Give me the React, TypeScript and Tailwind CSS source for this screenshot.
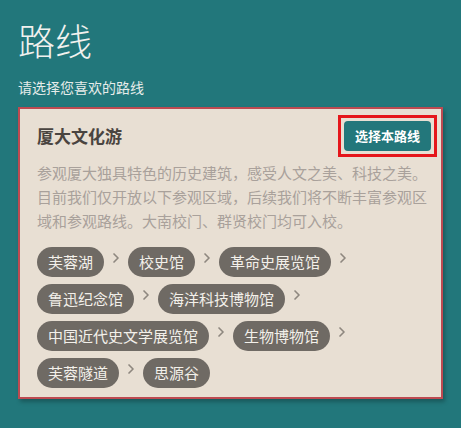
import { ChevronRight } from 'lucide-react'

const rows: string[][] = [
  ['芙蓉湖', '校史馆', '革命史展览馆'],
  ['鲁迅纪念馆', '海洋科技博物馆'],
  ['中国近代史文学展览馆', '生物博物馆'],
  ['芙蓉隧道', '思源谷'],
]

export default function App() {
  const last = rows.length - 1
  return (
    <div
      className="w-[461px] h-[428px] bg-[#22777b] px-[18px] pt-[17px] overflow-hidden"
      style={{ fontFamily: '"Noto Sans CJK SC", "Noto Sans", sans-serif' }}
    >
      <h1 className="text-[37px] leading-[46px] font-light text-[#f1f1ee]">路线</h1>
      <p className="mt-[14px] text-[14px] leading-[20px] text-[#e6ecea]">请选择您喜欢的路线</p>

      <div className="mt-[10px] h-[292px] bg-[#e8dfd3] border-2 border-[#bd4a51] shadow-[2px_3px_4px_rgba(0,0,0,0.25)] pl-[17px] pr-[10px] pt-[6px]">
        <div className="flex items-center justify-between">
          <h2 className="text-[17px] font-bold text-[#4a4440] leading-[24px]">厦大文化游</h2>
          <div className="border-[3px] border-[#e5161b] p-[3px] -mr-[6px]">
            <button className="bg-[#23777b] text-white text-[13px] font-bold rounded-[4px] px-[11px] h-[30px] leading-[30px]">
              选择本路线
            </button>
          </div>
        </div>
        <p className="mt-[4px] text-[15px] leading-[24px] text-[#a9a19b]">
          参观厦大独具特色的历史建筑，感受人文之美、科技之美。目前我们仅开放以下参观区域，后续我们将不断丰富参观区域和参观路线。大南校门、群贤校门均可入校。
        </p>
        <div className="mt-[14px] flex flex-col gap-[7px]">
          {rows.map((row, ri) => (
            <div key={ri} className="flex items-center">
              {row.map((t, i) => {
                const isEnd = ri === last && i === row.length - 1
                return (
                  <div key={t} className="flex items-center">
                    <span className="h-[30px] leading-[30px] rounded-full bg-[#6f6a64] text-[#f3f0ea] text-[15px] px-[11px] whitespace-nowrap">
                      {t}
                    </span>
                    {!isEnd && (
                      <ChevronRight className="w-[16px] h-[16px] text-[#8e877f] mx-[4px] -mt-[8px]" strokeWidth={2.5} />
                    )}
                  </div>
                )
              })}
            </div>
          ))}
        </div>
      </div>
    </div>
  )
}
